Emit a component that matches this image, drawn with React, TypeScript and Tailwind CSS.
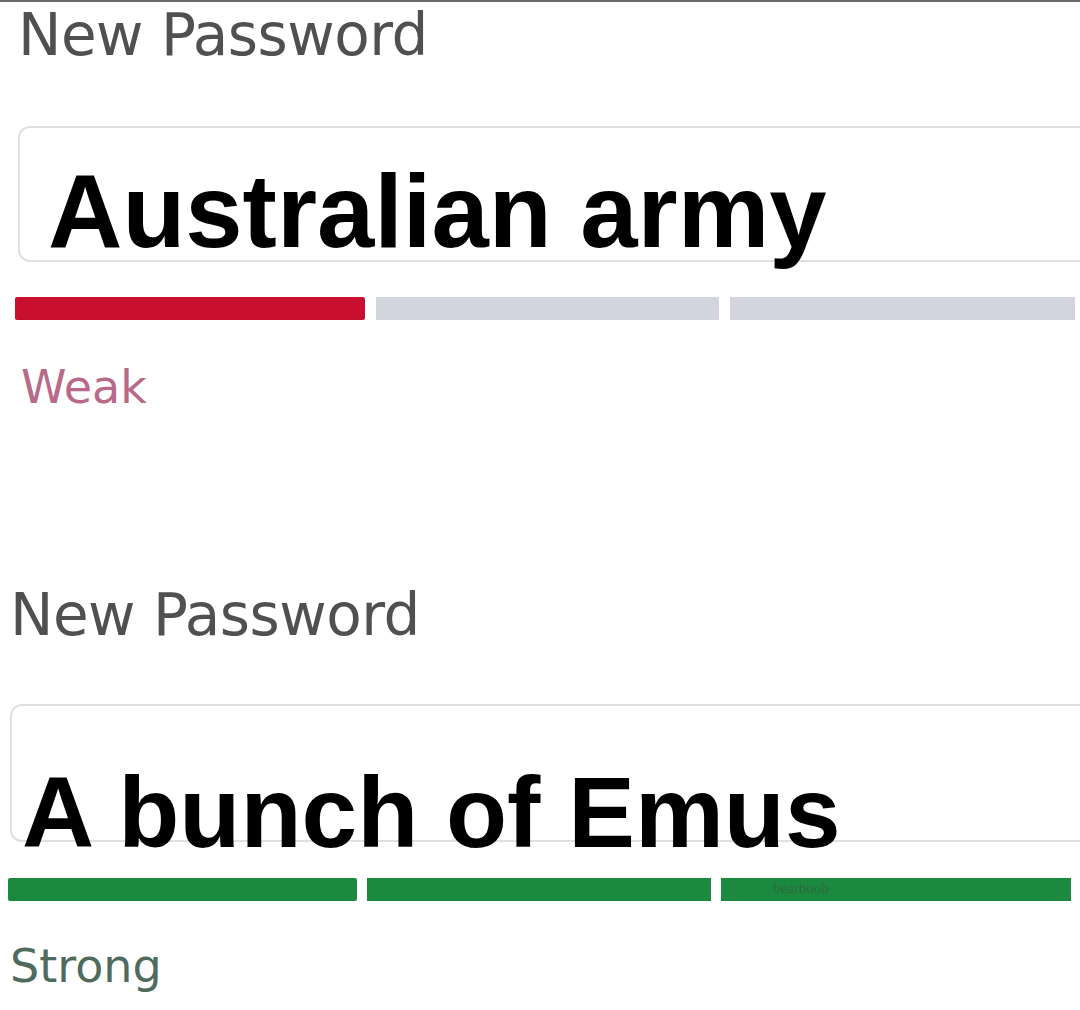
import React from "react";

const labelFont = { fontFamily: '"DejaVu Sans", "Open Sans", sans-serif' };
const bigFont = { fontFamily: '"Liberation Sans", Arial, sans-serif' };

export default function App() {
  return (
    <div className="w-[1080px] h-[1010px] overflow-hidden bg-white border-t-2 border-[#6b6b6b]">
      {/* Section 1 */}
      <div className="pl-[18px] pt-[4px]">
        <div className="text-[58px] leading-none text-[#505050] tracking-[-0.5px]" style={labelFont}>
          New Password
        </div>
        <div className="mt-[62px] w-[1100px] h-[136px] rounded-[12px] border-2 border-[#e0e0e0] pt-[32px] pl-[28px]">
          <div className="text-[103px] leading-none font-bold text-black" style={bigFont}>
            Australian army
          </div>
        </div>
        <div className="flex gap-[11px] mt-[35px] ml-[-3px]">
          <div className="w-[350px] h-[23px] bg-[#c8102e] rounded-[2px]" />
          <div className="w-[343px] h-[23px] bg-[#d2d4de]" />
          <div className="w-[345px] h-[23px] bg-[#d2d4de]" />
        </div>
        <div className="mt-[44px] pl-[3px] text-[46px] leading-none text-[#b86a88]" style={labelFont}>
          Weak
        </div>
      </div>

      {/* Section 2 */}
      <div className="pl-[10px] mt-[176px]">
        <div className="text-[58px] leading-none text-[#505050] tracking-[-0.5px]" style={labelFont}>
          New Password
        </div>
        <div className="mt-[60px] w-[1100px] h-[138px] rounded-[12px] border-2 border-[#e0e0e0] pt-[56px] pl-[10px]">
          <div className="text-[100px] leading-none font-bold text-black whitespace-nowrap" style={bigFont}>
            A bunch of Emus
          </div>
        </div>
        <div className="flex gap-[10px] mt-[36px] ml-[-2px]">
          <div className="w-[349px] h-[23px] bg-[#1b8a3e] rounded-[2px]" />
          <div className="w-[344px] h-[23px] bg-[#1b8a3e]" />
          <div className="relative w-[350px] h-[23px] bg-[#1b8a3e]">
            <span
              className="absolute left-[52px] top-[3px] text-[15px] leading-none text-[#2f6a40]"
              style={{ fontFamily: '"Liberation Serif", serif' }}
            >
              bearboob
            </span>
          </div>
        </div>
        <div className="mt-[42px] text-[46px] leading-none text-[#4f6b5e]" style={labelFont}>
          Strong
        </div>
      </div>
    </div>
  );
}
